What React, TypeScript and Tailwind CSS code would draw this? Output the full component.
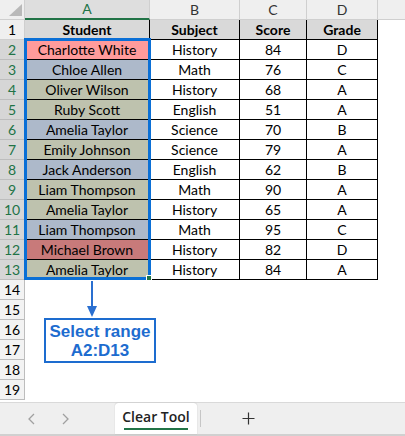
import React from 'react';

const PINK = '#ff9b9b';
const BLUE = '#adb9ca';
const SAGE = '#bec2ae';
const RED = '#c87a7a';

const rows = [
    { name: 'Charlotte White', subject: 'History', score: 84, grade: 'D', bg: PINK },
    { name: 'Chloe Allen', subject: 'Math', score: 76, grade: 'C', bg: BLUE },
    { name: 'Oliver Wilson', subject: 'History', score: 68, grade: 'A', bg: SAGE },
    { name: 'Ruby Scott', subject: 'English', score: 51, grade: 'A', bg: SAGE },
    { name: 'Amelia Taylor', subject: 'Science', score: 70, grade: 'B', bg: BLUE },
    { name: 'Emily Johnson', subject: 'Science', score: 79, grade: 'A', bg: SAGE },
    { name: 'Jack Anderson', subject: 'English', score: 62, grade: 'B', bg: BLUE },
    { name: 'Liam Thompson', subject: 'Math', score: 90, grade: 'A', bg: SAGE },
    { name: 'Amelia Taylor', subject: 'History', score: 65, grade: 'A', bg: SAGE },
    { name: 'Liam Thompson', subject: 'Math', score: 95, grade: 'C', bg: BLUE },
    { name: 'Michael Brown', subject: 'History', score: 82, grade: 'D', bg: RED },
    { name: 'Amelia Taylor', subject: 'History', score: 84, grade: 'A', bg: SAGE },
];

const cellFont = { fontFamily: 'Lato, "Open Sans", sans-serif' };

export default function App() {
    return (
        <div className="w-[405px] h-[436px] bg-white flex flex-col overflow-hidden text-[14px] text-black" style={cellFont}>

            {/* Sheet */}
            <div className="relative h-[402px] overflow-hidden">
                <div className="grid grid-cols-[25px_125px_90px_67px_71px_27px] auto-rows-[20px]">

                    {/* Column headers */}
                    <div className="relative bg-[#efefef] border-r border-b border-[#cfcfcf]">
                        <div className="absolute right-[2px] bottom-[3px] w-0 h-0 border-l-[13px] border-l-transparent border-b-[12px] border-b-[#b9b9b9]"></div>
                    </div>
                    <div className="bg-[#dedede] border-r border-[#cfcfcf] border-b-2 border-b-[#217346] flex items-center justify-center text-[#217346] leading-none">A</div>
                    {['B', 'C', 'D'].map((c) => (
                        <div key={c} className="bg-[#efefef] border-r border-b border-[#cfcfcf] flex items-center justify-center text-[#333] leading-none">{c}</div>
                    ))}
                    <div className="bg-[#efefef] border-b border-[#cfcfcf]"></div>

                    {/* Row 1 */}
                    <div className="bg-[#efefef] border-r border-b border-[#cfcfcf] flex items-center justify-center leading-none">1</div>
                    {['Student', 'Subject', 'Score', 'Grade'].map((h) => (
                        <div key={h} className="bg-[#d9d9d9] border-r border-b border-black flex items-center justify-center font-bold leading-none">{h}</div>
                    ))}
                    <div></div>

                    {/* Data rows */}
                    {rows.map((r, i) => (
                        <React.Fragment key={i}>
                            <div className="bg-[#d6d6d6] border-r border-b border-[#bdbdbd] flex items-center justify-center text-[#217346] leading-none">{i + 2}</div>
                            <div className="border-r border-b border-black flex items-center justify-center leading-none" style={{ backgroundColor: r.bg }}>{r.name}</div>
                            <div className="border-r border-b border-black flex items-center justify-center leading-none">{r.subject}</div>
                            <div className="border-r border-b border-black flex items-center justify-center leading-none">{r.score}</div>
                            <div className="border-r border-b border-black flex items-center justify-center leading-none">{r.grade}</div>
                            <div></div>
                        </React.Fragment>
                    ))}

                    {/* Empty rows */}
                    {[14, 15, 16, 17, 18, 19].map((n) => (
                        <React.Fragment key={n}>
                            <div className="bg-[#f3f3f3] border-r border-b border-[#bdbdbd] flex items-center justify-center leading-none">{n}</div>
                            <div className="col-span-5"></div>
                        </React.Fragment>
                    ))}
                </div>

                {/* Selection A2:A13 */}
                <div className="absolute left-[24px] top-[38px] w-[127px] h-[242px] border-[3px] border-[#0a6fd6] pointer-events-none"></div>
                <div className="absolute left-[146px] top-[275px] w-[6px] h-[6px] bg-[#217346] border border-white"></div>

                {/* Arrow */}
                <div className="absolute left-[91px] top-[281px] w-[2px] h-[27px] bg-[#2a6fd0]"></div>
                <div className="absolute left-[87px] top-[306px] w-0 h-0 border-l-[5px] border-r-[5px] border-t-[11px] border-l-transparent border-r-transparent border-t-[#2a6fd0]"></div>

                {/* Callout */}
                <div className="absolute left-[44px] top-[318px] w-[112px] h-[45px] border-2 border-[#1d6ccf] bg-white flex flex-col items-center justify-center text-[#1d6ccf] font-bold text-[17px] leading-[19px]" style={{ fontFamily: '"Liberation Sans", Arial, sans-serif' }}>
                    <span>Select range</span>
                    <span>A2:D13</span>
                </div>
            </div>

            {/* Sheet tabs */}
            <div className="h-[34px] bg-[#efefef] border-t border-[#d9d9d9] border-b-2 border-b-[#d0d0d0] flex items-stretch" style={{ fontFamily: '"Open Sans", sans-serif' }}>
                <div className="w-[115px] flex items-center">
                    <svg width="10" height="12" viewBox="0 0 10 12" className="ml-[27px]">
                        <path d="M7 1 L2 6 L7 11" fill="none" stroke="#a0a0a0" strokeWidth="1.3" />
                    </svg>
                    <svg width="10" height="12" viewBox="0 0 10 12" className="ml-[23px]">
                        <path d="M3 1 L8 6 L3 11" fill="none" stroke="#a0a0a0" strokeWidth="1.3" />
                    </svg>
                </div>
                <div className="w-[82px] bg-white rounded-t-[3px] shadow-[0_0_1px_rgba(0,0,0,0.3)] flex flex-col items-center justify-center">
                    <span className="text-[14px] font-semibold text-[#222] leading-[18px]">Clear Tool</span>
                    <div className="w-[64px] h-[2px] bg-[#217346] mt-[2px]"></div>
                </div>
                <div className="w-[1px] my-[7px] ml-[3px] bg-[#c6c6c6]"></div>
                <div className="flex items-center ml-[41px]">
                    <svg width="13" height="13" viewBox="0 0 13 13">
                        <path d="M6.5 0.5 V12.5 M0.5 6.5 H12.5" stroke="#333" strokeWidth="1.2" />
                    </svg>
                </div>
            </div>
        </div>
    );
}
